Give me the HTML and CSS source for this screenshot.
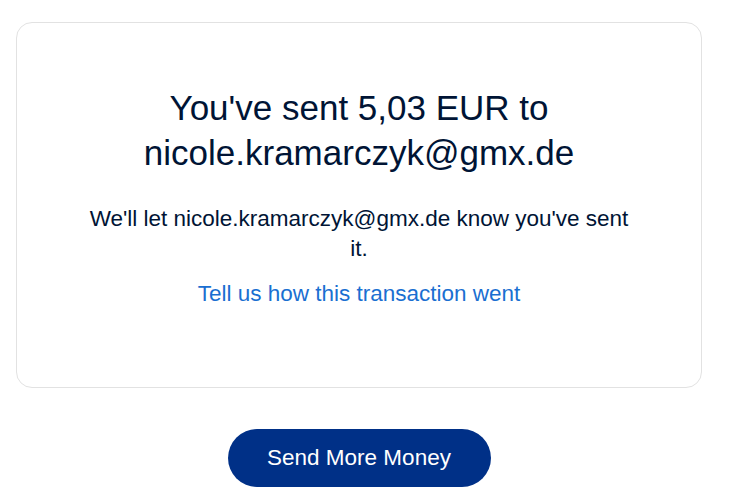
FILE: index.html
```html
<!DOCTYPE html>
<html>
<head>
<meta charset="utf-8">
<link rel="stylesheet" href="styles.css">
</head>
<body>
<main class="page">
  <section class="card">
    <h1 class="title">You've sent 5,03 EUR to nicole.kramarczyk@gmx.de</h1>
    <p class="note">We'll let nicole.kramarczyk@gmx.de know you've sent it.</p>
    <a class="feedback" href="#">Tell us how this transaction went</a>
  </section>
  <div class="actions">
    <button class="primary">Send More Money</button>
  </div>
</main>
</body>
</html>
```
FILE: styles.css
```css
html, body {
  margin: 0;
  background: #ffffff;
}
body {
  font-family: Arial, "Liberation Sans", sans-serif;
  color: #001435;
}
.page {
  padding: 22px 30px 0 16px;
  display: flex;
  flex-direction: column;
}
.card {
  border: 1px solid #e2e2e2;
  border-radius: 16px;
  height: 366px;
  box-sizing: border-box;
  padding: 62px 40px 0;
  display: flex;
  flex-direction: column;
  align-items: center;
  text-align: center;
}
.title {
  margin: 0;
  font-size: 35px;
  font-weight: 400;
  line-height: 45px;
  max-width: 480px;
}
.note {
  margin: 29px 0 0;
  font-size: 22.5px;
  line-height: 30px;
  max-width: 550px;
}
.feedback {
  margin-top: 15px;
  font-size: 22.5px;
  line-height: 30px;
  color: #1a6fd1;
  text-decoration: none;
}
.actions {
  display: flex;
  justify-content: center;
  padding-top: 41px;
}
.primary {
  width: 263px;
  height: 58px;
  border: none;
  border-radius: 29px;
  background: #003087;
  color: #ffffff;
  font-family: Arial, "Liberation Sans", sans-serif;
  font-size: 22.5px;
}
```
